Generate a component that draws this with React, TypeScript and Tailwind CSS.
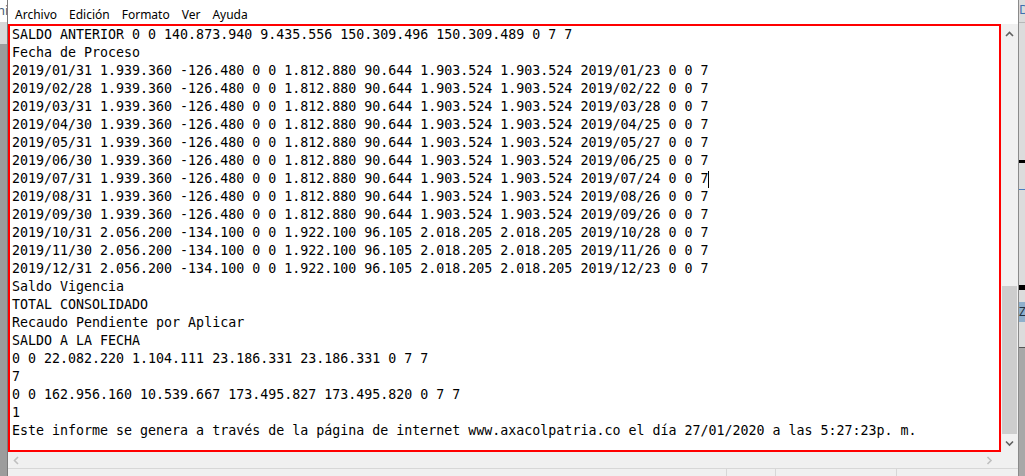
import React from "react";

const lines: string[] = [
  "SALDO ANTERIOR 0 0 140.873.940 9.435.556 150.309.496 150.309.489 0 7 7",
  "Fecha de Proceso",
  "2019/01/31 1.939.360 -126.480 0 0 1.812.880 90.644 1.903.524 1.903.524 2019/01/23 0 0 7",
  "2019/02/28 1.939.360 -126.480 0 0 1.812.880 90.644 1.903.524 1.903.524 2019/02/22 0 0 7",
  "2019/03/31 1.939.360 -126.480 0 0 1.812.880 90.644 1.903.524 1.903.524 2019/03/28 0 0 7",
  "2019/04/30 1.939.360 -126.480 0 0 1.812.880 90.644 1.903.524 1.903.524 2019/04/25 0 0 7",
  "2019/05/31 1.939.360 -126.480 0 0 1.812.880 90.644 1.903.524 1.903.524 2019/05/27 0 0 7",
  "2019/06/30 1.939.360 -126.480 0 0 1.812.880 90.644 1.903.524 1.903.524 2019/06/25 0 0 7",
  "2019/07/31 1.939.360 -126.480 0 0 1.812.880 90.644 1.903.524 1.903.524 2019/07/24 0 0 7",
  "2019/08/31 1.939.360 -126.480 0 0 1.812.880 90.644 1.903.524 1.903.524 2019/08/26 0 0 7",
  "2019/09/30 1.939.360 -126.480 0 0 1.812.880 90.644 1.903.524 1.903.524 2019/09/26 0 0 7",
  "2019/10/31 2.056.200 -134.100 0 0 1.922.100 96.105 2.018.205 2.018.205 2019/10/28 0 0 7",
  "2019/11/30 2.056.200 -134.100 0 0 1.922.100 96.105 2.018.205 2.018.205 2019/11/26 0 0 7",
  "2019/12/31 2.056.200 -134.100 0 0 1.922.100 96.105 2.018.205 2.018.205 2019/12/23 0 0 7",
  "Saldo Vigencia",
  "TOTAL CONSOLIDADO",
  "Recaudo Pendiente por Aplicar",
  "SALDO A LA FECHA",
  "0 0 22.082.220 1.104.111 23.186.331 23.186.331 0 7 7",
  "7",
  "0 0 162.956.160 10.539.667 173.495.827 173.495.820 0 7 7",
  "1",
  "Este informe se genera a través de la página de internet www.axacolpatria.co el día 27/01/2020 a las 5:27:23p. m.",
];

const menu = ["Archivo", "Edición", "Formato", "Ver", "Ayuda"];

function Chevron({ dir }: { dir: "up" | "down" | "left" | "right" }) {
  const d = {
    up: "M1 5 L4.5 1.5 L8 5",
    down: "M1 1.5 L4.5 5 L8 1.5",
    left: "M5 1 L1.5 4.5 L5 8",
    right: "M1.5 1 L5 4.5 L1.5 8",
  }[dir];
  const w = dir === "up" || dir === "down" ? 9 : 7;
  const h = dir === "up" || dir === "down" ? 7 : 9;
  return (
    <svg width={w} height={h} viewBox={`0 0 ${w} ${h}`}>
      <path d={d} fill="none" stroke="currentColor" strokeWidth="1.6" />
    </svg>
  );
}

export default function App() {
  return (
    <div className="flex h-[476px] w-[1025px] overflow-hidden bg-white">
      {/* background window peeking on the left */}
      <div className="flex w-[8px] flex-col border-r border-[#7a7a7a]">
        <div className="h-[22px] overflow-hidden bg-white pt-[2px] text-[13px] leading-[16px] text-[#4a5f7a] [font-family:'Noto_Sans',sans-serif]">
          <span className="-ml-[3px]">ni</span>
        </div>
        <div className="h-[22px] bg-[#d8d8d8]" />
        <div className="flex-1 bg-[#9c9c9c]" />
      </div>

      {/* notepad */}
      <div className="flex w-[1010px] flex-col">
        <div className="flex h-[24px] items-center gap-[12px] pl-[7px] pt-[5px] text-[12px] text-black [font-family:'Noto_Sans',sans-serif]">
          {menu.map((m) => (
            <span key={m}>{m}</span>
          ))}
        </div>

        <div className="flex h-[428px]">
          <div className="relative w-[993px] border-2 border-[#ff0000] bg-white pl-[2px]">
            <pre className="text-[13.3px] leading-[18px] text-black [font-family:'DejaVu_Sans_Mono',monospace]">
              {lines.join("\n")}
            </pre>
            <div className="absolute left-[698px] top-[145px] h-[17px] w-px bg-black" />
          </div>

          <div className="flex w-[17px] flex-col bg-[#f0f0f0] text-[#606060]">
            <div className="flex h-[20px] items-center justify-center">
              <Chevron dir="up" />
            </div>
            <div className="h-[242px]" />
            <div className="mx-auto h-[148px] w-[15px] bg-[#cdcdcd]" />
            <div className="flex flex-1 items-center justify-center">
              <Chevron dir="down" />
            </div>
          </div>
        </div>

        <div className="flex h-[16px] items-center justify-between bg-[#f0f0f0] pl-[5px] pr-[25px] text-[#bfbfbf]">
          <Chevron dir="left" />
          <Chevron dir="right" />
        </div>
        <div className="flex flex-1 border-t border-[#d7d7d7] bg-[#f0f0f0]">
          <div className="w-[719px] border-r border-[#d7d7d7]" />
          <div className="w-[49px] border-r border-[#d7d7d7]" />
          <div className="w-[121px] border-r border-[#d7d7d7]" />
          <div className="flex-1" />
        </div>
      </div>

      {/* background window peeking on the right */}
      <div className="flex w-[7px] flex-col border-l border-[#8a8a8a] bg-[#dcdcdc]">
        <div className="h-[22px] overflow-hidden pt-[1px] text-[13px] leading-[16px] text-[#3f6fb0] [font-family:'Noto_Sans',sans-serif]">
          D
        </div>
        <div className="h-px bg-[#b8b8b8]" />
        <div className="h-[137px]" />
        <div className="h-[3px] bg-black" />
        <div className="h-[26px]" />
        <div className="h-px bg-[#4a7fc0]" />
        <div className="h-[95px]" />
        <div className="h-[5px] bg-black" />
        <div className="h-[12px]" />
        <div className="h-[20px] bg-[#8fb0cc] text-[12px] leading-[20px] text-[#203040]">Z</div>
        <div className="h-[25px]" />
        <div className="flex-1 border-t border-[#555] bg-[#a8a8a8]" />
      </div>
    </div>
  );
}
